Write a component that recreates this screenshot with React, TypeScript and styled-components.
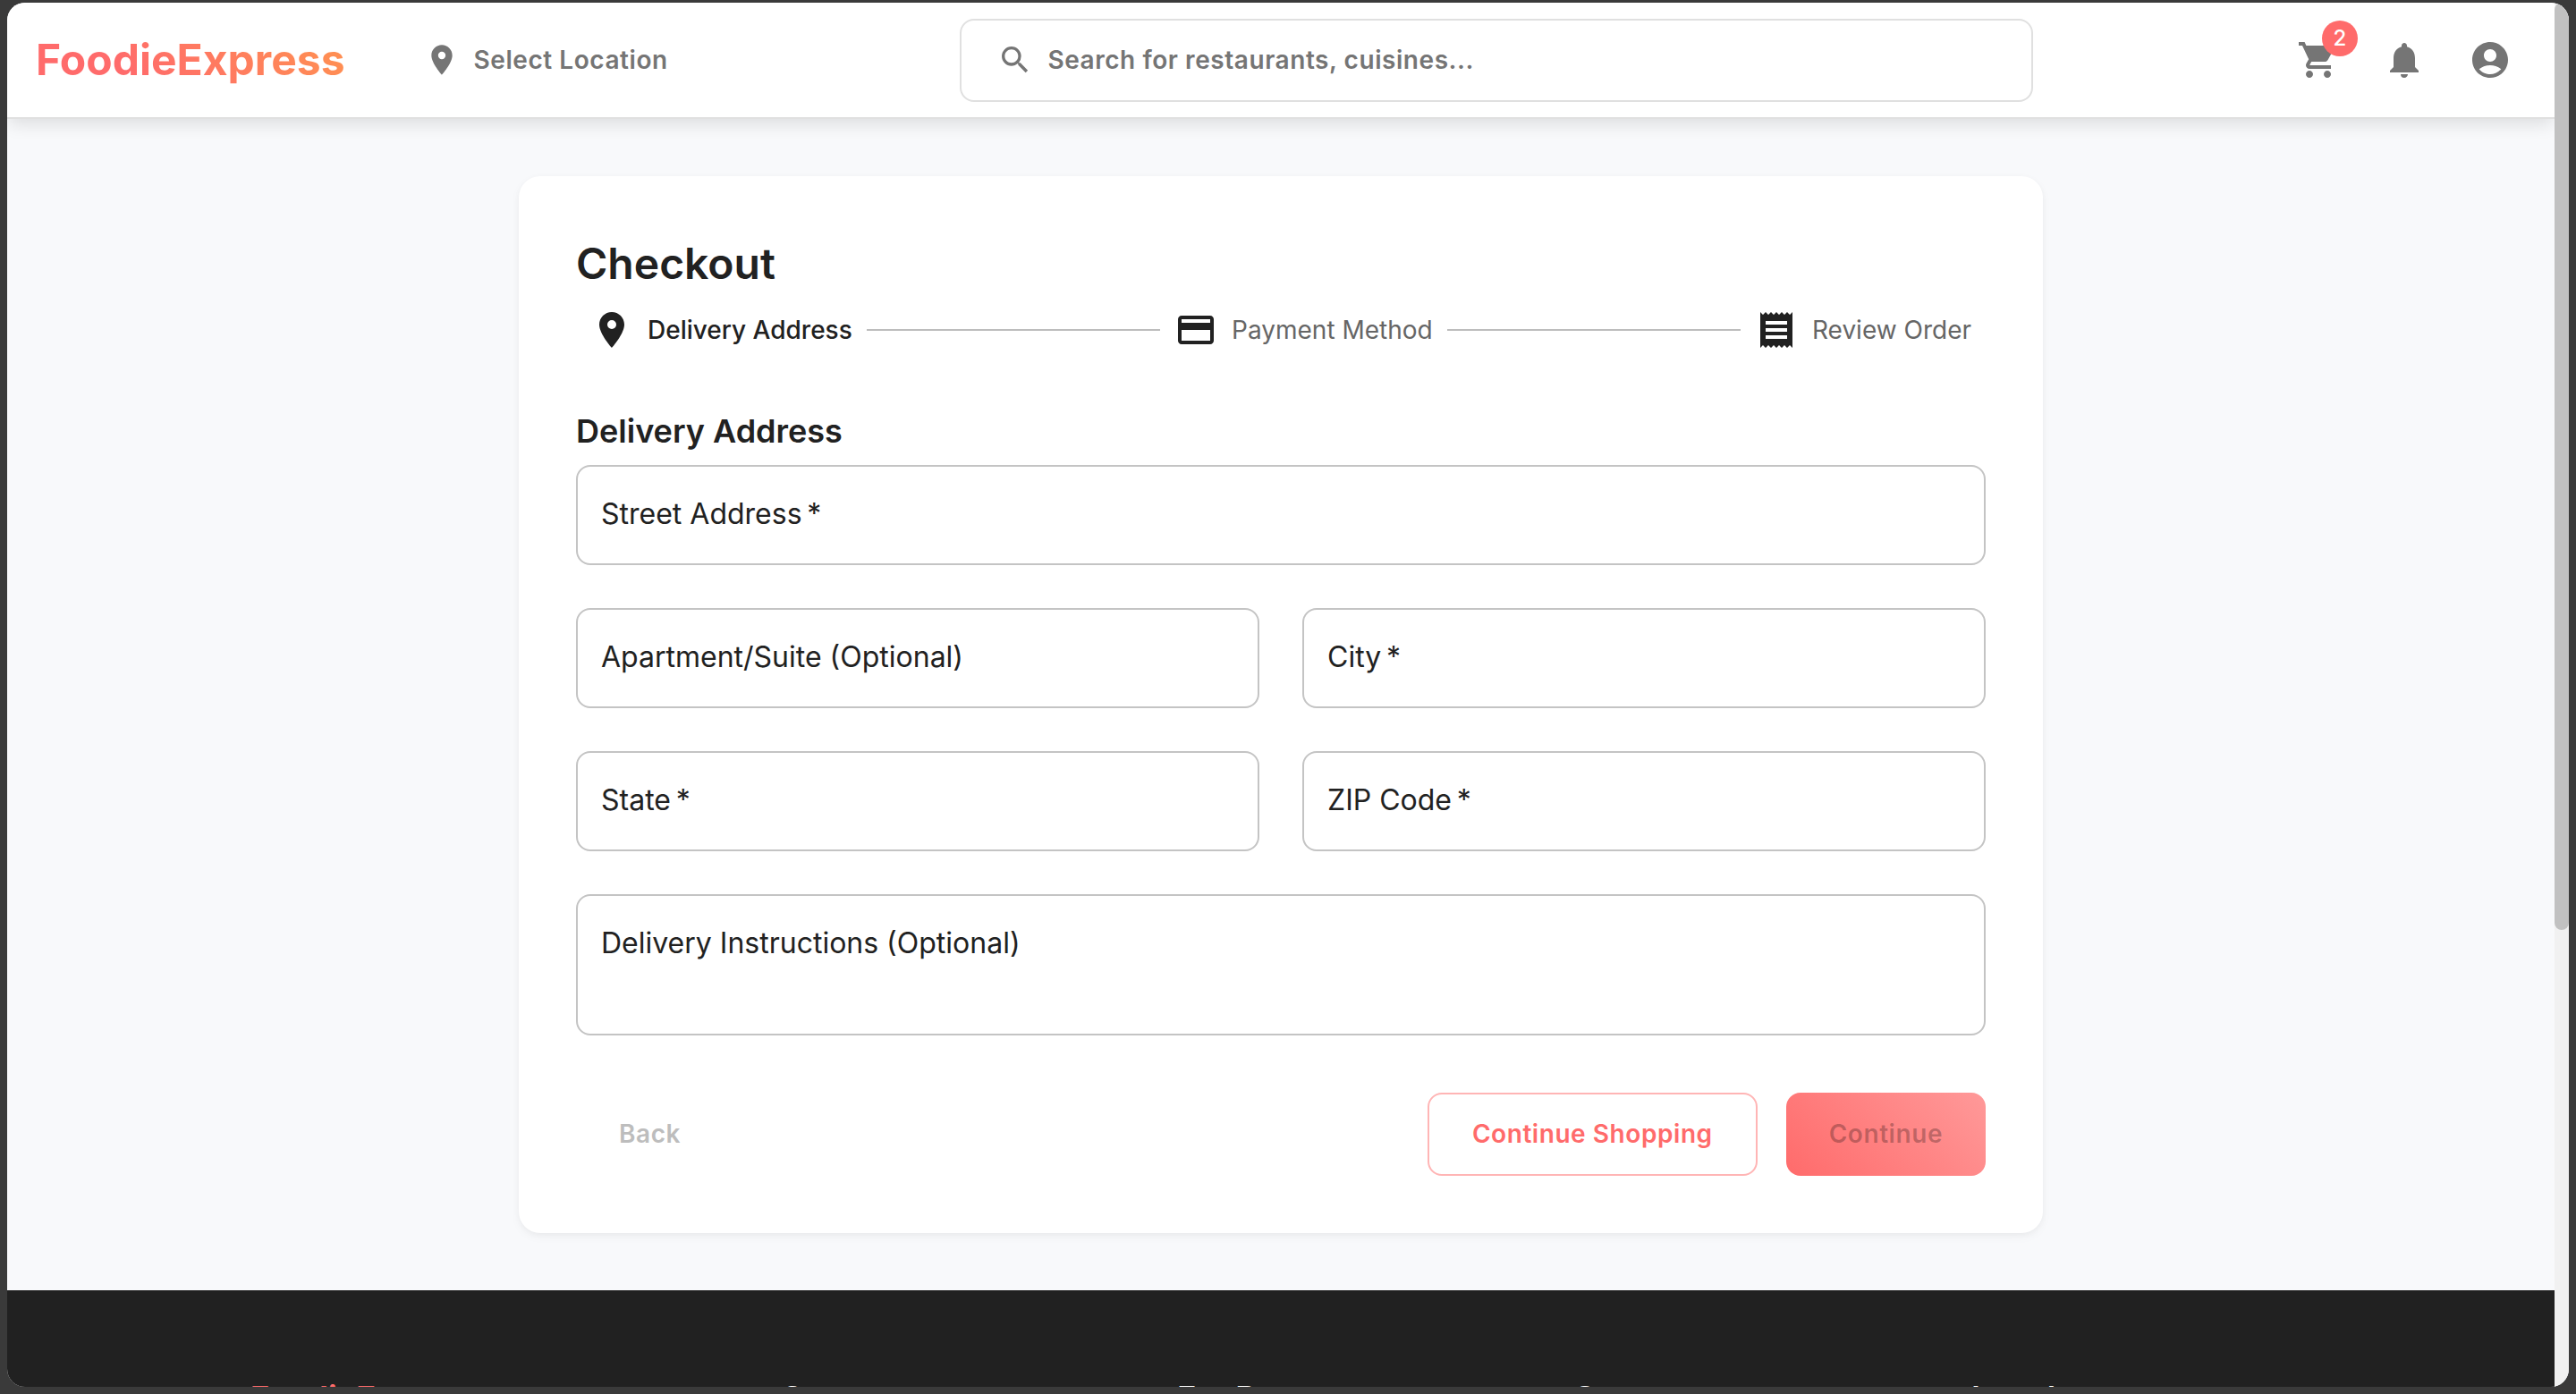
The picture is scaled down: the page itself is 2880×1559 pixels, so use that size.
import React from "react";
import styled, { createGlobalStyle } from "styled-components";
import {
  MdAccountCircle,
  MdLocationOn,
  MdNotifications,
  MdPayment,
  MdReceipt,
  MdSearch,
  MdShoppingCart,
} from "react-icons/md";

const GlobalStyle = createGlobalStyle`
  * { box-sizing: border-box; }
  body {
    margin: 0;
    background: #3a3a3a;
    color: #212121;
    font-family: Inter, "Liberation Sans", sans-serif;
  }
  h1, h2, h3, ol { margin: 0; padding: 0; }
`;

const Frame = styled.div`
  height: 100vh;
  padding: 3px 8px 8px;
`;

const Viewport = styled.div`
  display: flex;
  height: 100%;
  overflow: hidden;
  border-radius: 20px;
  background: #f8f9fb;
`;

const Page = styled.div`
  display: flex;
  flex-direction: column;
  flex: 1;
  min-width: 0;
  overflow: hidden;
`;

const ScrollTrack = styled.div`
  width: 16px;
  background: #f1f1f1;
`;

const ScrollThumb = styled.div`
  height: 67%;
  border-radius: 8px;
  background: #c1c1c1;
`;

const Header = styled.header`
  position: relative;
  z-index: 1;
  display: flex;
  align-items: center;
  flex-shrink: 0;
  height: 130px;
  padding: 0 32px;
  border-bottom: 2px solid #e0e0e0;
  background: #fff;
  color: #757575;
  box-shadow: 0 8px 18px -2px rgba(0, 0, 0, 0.11);
`;

const Brand = styled.a`
  margin-right: 48px;
  background: linear-gradient(45deg, #ff6b6b 30%, #ff8e53 90%);
  background-clip: text;
  color: transparent;
  font-size: 48px;
  font-weight: 700;
  line-height: 64px;
  text-decoration: none;
`;

const Button = styled.button`
  display: flex;
  align-items: center;
  gap: 16px;
  padding: 20px 46px;
  border: 2px solid transparent;
  border-radius: 16px;
  background: transparent;
  color: inherit;
  font-family: inherit;
  font-size: 28px;
  font-weight: 600;
  letter-spacing: 0.02em;
  line-height: 49px;
  white-space: nowrap;
`;

const LocationButton = styled(Button)`
  padding: 20px 46px 20px 38px;
`;

const SearchArea = styled.div`
  display: flex;
  justify-content: center;
  flex: 1;
`;

const SearchButton = styled(Button)`
  width: 100%;
  max-width: 1200px;
  padding-left: 40px;
  border-color: #e0e0e0;
`;

const Actions = styled.nav`
  display: flex;
  gap: 16px;
`;

const IconButton = styled.button`
  position: relative;
  display: flex;
  padding: 16px;
  border: 0;
  background: transparent;
  color: inherit;
`;

const Badge = styled.span`
  position: absolute;
  top: -4px;
  right: -4px;
  width: 40px;
  border-radius: 20px;
  background: #ff6b6b;
  color: #fff;
  font-family: Inter, "Liberation Sans", sans-serif;
  font-size: 24px;
  font-weight: 500;
  line-height: 40px;
  text-align: center;
`;

const Main = styled.main`
  width: 100%;
  max-width: 1800px;
  margin: 0 auto;
  padding: 64px 48px;
`;

const Card = styled.section`
  padding: 64px;
  border-radius: 24px;
  background: #fff;
  box-shadow: 0 2px 6px rgba(0, 0, 0, 0.03), 0 4px 12px rgba(0, 0, 0, 0.04);
`;

const Title = styled.h1`
  margin-bottom: 17px;
  font-size: 48px;
  font-weight: 600;
  line-height: 67px;
`;

const Steps = styled.ol`
  display: flex;
  align-items: center;
  margin-bottom: 64px;
  list-style: none;
`;

const Step = styled.li<{ $active?: boolean }>`
  display: flex;
  align-items: center;
  gap: 16px;
  padding: 0 16px;
  font-size: 28px;
  font-weight: ${(p) => (p.$active ? 500 : 400)};
  line-height: 40px;
`;

const StepLabel = styled.span<{ $active?: boolean }>`
  color: ${(p) => (p.$active ? "#212121" : "#666")};
`;

const Connector = styled.li`
  flex: 1;
  height: 2px;
  background: #bdbdbd;
`;

const SectionTitle = styled.h2`
  margin-bottom: 12px;
  font-size: 36px;
  font-weight: 600;
  line-height: 51px;
`;

const Fields = styled.div`
  display: grid;
  grid-template-columns: 1fr 1fr;
  gap: 48px;
`;

const FieldBox = styled.div<{ $wide?: boolean }>`
  display: grid;
  grid-column: ${(p) => (p.$wide ? "1 / -1" : "auto")};

  > * { grid-area: 1 / 1; }
`;

const FieldLabel = styled.label`
  z-index: 1;
  justify-self: start;
  align-self: start;
  padding: 32px 28px;
  font-size: 32px;
  line-height: 46px;
  pointer-events: none;
`;

const TextInput = styled.input`
  width: 100%;
  height: 112px;
  padding: 32px 26px;
  border: 2px solid #c4c4c4;
  border-radius: 16px;
  background: transparent;
  font: inherit;
  font-size: 32px;
`;

const TextArea = styled.textarea`
  width: 100%;
  height: 158px;
  padding: 32px 26px;
  border: 2px solid #c4c4c4;
  border-radius: 16px;
  background: transparent;
  font: inherit;
  font-size: 32px;
  resize: none;
`;

const FormActions = styled.div`
  display: flex;
  gap: 32px;
  margin-top: 64px;
`;

const BackButton = styled(Button)`
  margin-right: auto;
  color: #bdbdbd;
`;

const OutlinedButton = styled(Button)`
  padding: 20px 48px;
  border-color: #ffb5b5;
  color: #ff6b6b;
`;

const PrimaryButton = styled(Button)`
  padding: 22px 48px;
  border: 0;
  background: linear-gradient(45deg, #ff6b6b 0%, #ff9999 100%);
  color: rgba(0, 0, 0, 0.26);
`;

const Footer = styled.footer`
  flex: 1 0 auto;
  background: #212121;
  color: #fff;
`;

const FooterGrid = styled.div`
  display: grid;
  grid-template-columns: 528fr repeat(4, 380fr);
  gap: 64px;
  max-width: 2400px;
  margin: 0 auto;
  padding: 96px 48px;
`;

const FooterTitle = styled.h3<{ $brand?: boolean }>`
  color: ${(p) => (p.$brand ? "#ff6b6b" : "inherit")};
  font-size: 36px;
  font-weight: ${(p) => (p.$brand ? 700 : 600)};
  line-height: 49px;
  white-space: nowrap;
`;

type FieldProps = {
  id: string;
  label: string;
  required?: boolean;
  wide?: boolean;
  multiline?: boolean;
};

function Field({ id, label, required, wide, multiline }: FieldProps) {
  return (
    <FieldBox $wide={wide}>
      <FieldLabel htmlFor={id}>
        {label}
        {required && "\u2009*"}
      </FieldLabel>
      {multiline ? <TextArea id={id} /> : <TextInput id={id} type="text" required={required} />}
    </FieldBox>
  );
}

export default function App() {
  return (
    <>
      <GlobalStyle />
      <Frame>
        <Viewport>
          <Page>
            <Header>
              <Brand href="#">FoodieExpress</Brand>
              <LocationButton type="button">
                <MdLocationOn size={40} />
                Select Location
              </LocationButton>
              <SearchArea>
                <SearchButton type="button">
                  <MdSearch size={40} />
                  Search for restaurants, cuisines...
                </SearchButton>
              </SearchArea>
              <Actions>
                <IconButton type="button" aria-label="Cart">
                  <MdShoppingCart size={48} />
                  <Badge>2</Badge>
                </IconButton>
                <IconButton type="button" aria-label="Notifications">
                  <MdNotifications size={48} />
                </IconButton>
                <IconButton type="button" aria-label="Account">
                  <MdAccountCircle size={48} />
                </IconButton>
              </Actions>
            </Header>

            <Main>
              <Card>
                <Title>Checkout</Title>
                <Steps>
                  <Step $active>
                    <MdLocationOn size={48} />
                    <StepLabel $active>Delivery Address</StepLabel>
                  </Step>
                  <Connector aria-hidden="true" />
                  <Step>
                    <MdPayment size={48} />
                    <StepLabel>Payment Method</StepLabel>
                  </Step>
                  <Connector aria-hidden="true" />
                  <Step>
                    <MdReceipt size={48} />
                    <StepLabel>Review Order</StepLabel>
                  </Step>
                </Steps>

                <form>
                  <SectionTitle>Delivery Address</SectionTitle>
                  <Fields>
                    <Field id="street" label="Street Address" required wide />
                    <Field id="apartment" label="Apartment/Suite (Optional)" />
                    <Field id="city" label="City" required />
                    <Field id="state" label="State" required />
                    <Field id="zip" label="ZIP Code" required />
                    <Field id="instructions" label="Delivery Instructions (Optional)" wide multiline />
                  </Fields>
                  <FormActions>
                    <BackButton type="button" disabled>Back</BackButton>
                    <OutlinedButton type="button">Continue Shopping</OutlinedButton>
                    <PrimaryButton type="submit" disabled>Continue</PrimaryButton>
                  </FormActions>
                </form>
              </Card>
            </Main>

            <Footer>
              <FooterGrid>
                <FooterTitle $brand>FoodieExpress</FooterTitle>
                <FooterTitle>Company</FooterTitle>
                <FooterTitle>For Restaurants</FooterTitle>
                <FooterTitle>Support</FooterTitle>
                <FooterTitle>Legal</FooterTitle>
              </FooterGrid>
            </Footer>
          </Page>
          <ScrollTrack>
            <ScrollThumb />
          </ScrollTrack>
        </Viewport>
      </Frame>
    </>
  );
}
